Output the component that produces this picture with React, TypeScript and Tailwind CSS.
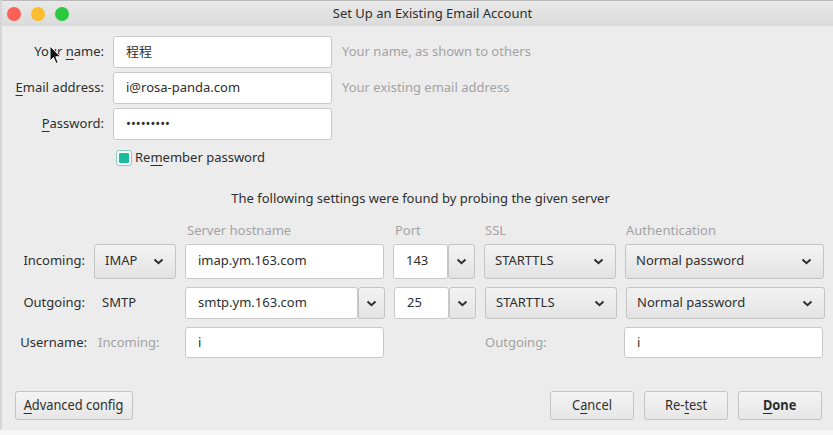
import React from "react";

const Chevron = () => (
  <svg width="11" height="7" viewBox="0 0 11 7" className="shrink-0">
    <polyline points="1.5,1.5 5.5,5.2 9.5,1.5" fill="none" stroke="#2f2f2f" strokeWidth="2" />
  </svg>
);

const U = ({ children }: { children: React.ReactNode }) => <span className="underline underline-offset-[3px] decoration-1">{children}</span>;

const Input = ({ value, w, h, cls = "" }: { value: string; w: string; h: string; cls?: string }) => (
  <div className={`${w} ${h} ${cls} bg-white border border-[#c9c9c9] rounded-[3px] flex items-center px-[12px] text-[#2e2e2e] text-[13px]`}>{value}</div>
);

const Select = ({ value, w, h }: { value: string; w: string; h: string }) => (
  <div className={`${w} ${h} bg-gradient-to-b from-[#f3f3f3] to-[#e3e3e3] border border-[#c4c4c4] rounded-[3px] flex items-center justify-between pl-[10px] pr-[11px] text-[#2e2e2e] text-[13px]`}>
    <span>{value}</span>
    <Chevron />
  </div>
);

const DropBtn = ({ w, h }: { w: string; h: string }) => (
  <div className={`${w} ${h} bg-gradient-to-b from-[#f3f3f3] to-[#e3e3e3] border border-[#c4c4c4] rounded-[3px] flex items-center justify-center`}>
    <Chevron />
  </div>
);

const Btn = ({ children, w, bold = false }: { children: React.ReactNode; w: string; bold?: boolean }) => (
  <div className={`${w} h-[29px] bg-gradient-to-b from-[#f4f4f4] to-[#e6e6e6] border border-[#c4c4c4] rounded-[3px] flex items-center justify-center text-[13.5px] text-[#2e2e2e] ${bold ? "font-bold" : ""}`}>
    <span className="inline-block scale-x-95">{children}</span>
  </div>
);

export default function App() {
  return (
    <div className="relative w-[833px] h-[435px] bg-[#f6f6f6] overflow-hidden text-[#2e2e2e] text-[13px]" style={{ fontFamily: '"Noto Sans", "Open Sans", "Noto Sans CJK SC", sans-serif' }}>
      <div className="h-[430px] bg-[#ececec] border-l-2 border-[#d6d6d6] flex flex-col">
        {/* title bar */}
        <div className="h-[26px] shrink-0 bg-gradient-to-b from-[#e9e9e9] to-[#dadada] border-t border-[#b9b9b9] flex items-center relative">
          <div className="flex items-center gap-[10px] pl-[5px]">
            <div className="w-[14px] h-[14px] rounded-full bg-[#fc5f57]" />
            <div className="w-[14px] h-[14px] rounded-full bg-[#fdbc2e]" />
            <div className="w-[14px] h-[14px] rounded-full bg-[#29c940]" />
          </div>
          <div className="absolute inset-0 flex items-center justify-center text-[13px] text-[#2e2e2e] pl-[30px]">Set Up an Existing Email Account</div>
        </div>

        {/* identity */}
        <div className="flex flex-col gap-[4px] pt-[10px]">
          {[
            { label: <>Your <U>n</U>ame:</>, value: "程程", hint: "Your name, as shown to others" },
            { label: <><U>E</U>mail address:</>, value: "i@rosa-panda.com", hint: "Your existing email address" },
            { label: <><U>P</U>assword:</>, value: "•••••••••", hint: "" },
          ].map((r, i) => (
            <div key={i} className="flex items-center h-[32px]">
              <div className="w-[102px] text-right">{r.label}</div>
              <Input value={r.value} w="w-[219px] ml-[9px]" h="h-[32px]" />
              <div className="ml-[10px] text-[#a3a3a3]">{r.hint}</div>
            </div>
          ))}
        </div>

        <div className="flex items-center h-[18px] mt-[9px] pl-[114px]">
          <div className="w-[16px] h-[16px] rounded-[3px] border border-[#7fd1bd] bg-white p-[2px]">
            <div className="w-full h-full bg-[#1abc9c] rounded-[1px]" />
          </div>
          <span className="ml-[3px]">Re<U>m</U>ember password</span>
        </div>

        <div className="mt-[22px] h-[20px] flex items-center justify-center pl-[6px]">
          <span className="text-[13px]">The following settings were found by probing the given server</span>
        </div>

        {/* server grid */}
        <div className="mt-[12px] flex flex-col pl-[12px]">
          <div className="flex h-[20px] items-center text-[#a3a3a3]">
            <div className="w-[71px]" />
            <div className="w-[82px] ml-[9px]" />
            <div className="w-[199px] ml-[9px] pl-[2px]">Server hostname</div>
            <div className="w-[81px] ml-[9px] pl-[2px]">Port</div>
            <div className="w-[132px] ml-[9px] pl-[2px]">SSL</div>
            <div className="w-[199px] ml-[9px] pl-[2px]">Authentication</div>
          </div>
          <div className="flex items-center h-[36px] mt-[2px]">
            <div className="w-[71px] text-right">Incoming:</div>
            <div className="ml-[9px]"><Select value="IMAP" w="w-[82px]" h="h-[35px]" /></div>
            <Input value="imap.ym.163.com" w="w-[199px] ml-[9px]" h="h-[35px]" />
            <div className="flex ml-[9px]">
              <Input value="143" w="w-[55px]" h="h-[35px]" />
              <DropBtn w="w-[27px]" h="h-[35px]" />
            </div>
            <div className="ml-[9px]"><Select value="STARTTLS" w="w-[132px]" h="h-[35px]" /></div>
            <div className="ml-[9px]"><Select value="Normal password" w="w-[199px]" h="h-[35px]" /></div>
          </div>
          <div className="flex items-center h-[32px] mt-[8px]">
            <div className="w-[71px] text-right">Outgoing:</div>
            <div className="w-[82px] ml-[9px] pl-[8px]">SMTP</div>
            <div className="flex ml-[9px]">
              <Input value="smtp.ym.163.com" w="w-[173px]" h="h-[32px]" />
              <DropBtn w="w-[27px]" h="h-[32px]" />
            </div>
            <div className="flex ml-[9px]">
              <Input value="25" w="w-[55px]" h="h-[32px]" />
              <DropBtn w="w-[27px]" h="h-[32px]" />
            </div>
            <div className="ml-[9px]"><Select value="STARTTLS" w="w-[132px]" h="h-[32px]" /></div>
            <div className="ml-[9px]"><Select value="Normal password" w="w-[199px]" h="h-[32px]" /></div>
          </div>
          <div className="flex items-center h-[31px] mt-[8px]">
            <div className="w-[73px] text-right">Username:</div>
            <div className="w-[80px] ml-[9px] pl-[2px] text-[#a3a3a3]">Incoming:</div>
            <Input value="i" w="w-[199px] ml-[9px]" h="h-[31px]" />
            <div className="w-[81px] ml-[9px]" />
            <div className="w-[132px] ml-[9px] pl-[2px] text-[#a3a3a3]">Outgoing:</div>
            <Input value="i" w="w-[199px] ml-[9px]" h="h-[31px]" />
          </div>
        </div>

        {/* buttons */}
        <div className="mt-auto mb-[10px] flex items-center pl-[13px] pr-[11px]">
          <Btn w="w-[118px]"><U>A</U>dvanced config</Btn>
          <div className="flex-1" />
          <div className="flex gap-[10px]">
            <Btn w="w-[84px]">C<U>a</U>ncel</Btn>
            <Btn w="w-[84px]">Re-<U>t</U>est</Btn>
            <Btn w="w-[84px]" bold><U>D</U>one</Btn>
          </div>
        </div>
      </div>

      {/* mouse cursor */}
      <svg className="absolute left-[49px] top-[45px]" width="13" height="20" viewBox="0 0 13 20">
        <path d="M1 1 L1 16 L4.5 12.5 L7 18.5 L9.2 17.6 L6.8 11.8 L11.5 11.8 Z" fill="#111" stroke="#fff" strokeWidth="1" strokeLinejoin="round" />
      </svg>
    </div>
  );
}
